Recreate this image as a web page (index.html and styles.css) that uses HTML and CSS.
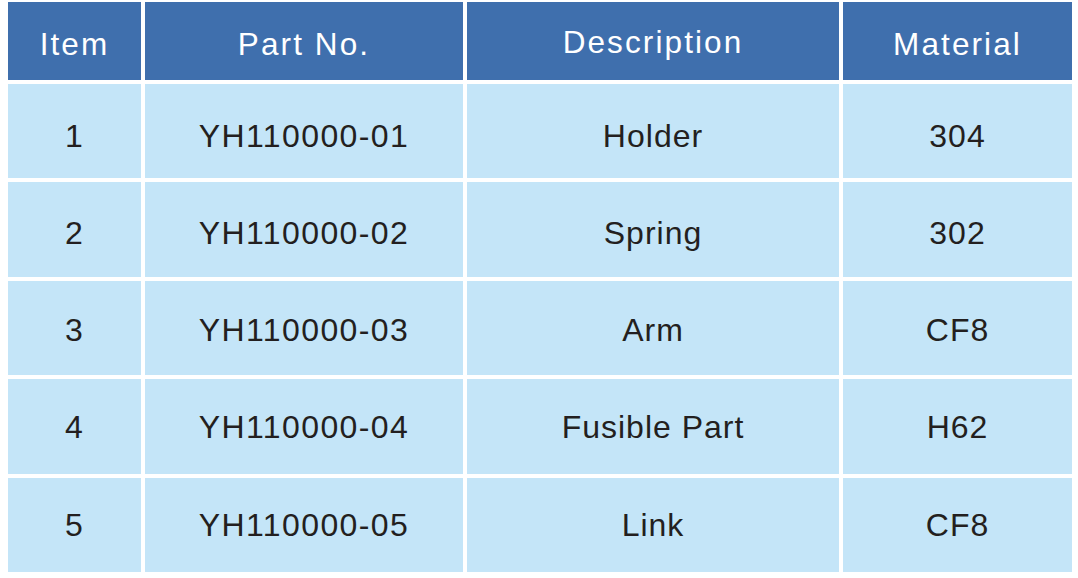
FILE: index.html
```html
<!DOCTYPE html>
<html lang="en">
<head>
<meta charset="utf-8">
<title>Parts</title>
<link rel="stylesheet" href="styles.css">
</head>
<body>
<div class="sheet">
  <div class="parts">
    <div class="cell head">Item</div>
    <div class="cell head">Part No.</div>
    <div class="cell head head-desc">Description</div>
    <div class="cell head">Material</div>

    <div class="cell r1">1</div>
    <div class="cell r1 code">YH110000-01</div>
    <div class="cell r1">Holder</div>
    <div class="cell r1">304</div>

    <div class="cell r2">2</div>
    <div class="cell r2 code">YH110000-02</div>
    <div class="cell r2">Spring</div>
    <div class="cell r2">302</div>

    <div class="cell r3">3</div>
    <div class="cell r3 code">YH110000-03</div>
    <div class="cell r3">Arm</div>
    <div class="cell r3">CF8</div>

    <div class="cell r4">4</div>
    <div class="cell r4 code">YH110000-04</div>
    <div class="cell r4">Fusible Part</div>
    <div class="cell r4">H62</div>

    <div class="cell r5">5</div>
    <div class="cell r5 code">YH110000-05</div>
    <div class="cell r5">Link</div>
    <div class="cell r5">CF8</div>
  </div>
</div>
</body>
</html>
```
FILE: styles.css
```css
html, body {
  margin: 0;
  padding: 0;
  background: #ffffff;
}

.sheet {
  padding: 2px 0 0 8px;
}

.parts {
  display: grid;
  grid-template-columns: 133px 318px 372px 229px;
  grid-template-rows: 78px repeat(5, 1fr);
  column-gap: 4px;
  row-gap: 4px;
  width: 1064px;
  height: 570px;
  font-family: "Liberation Sans", Arial, sans-serif;
}

.cell {
  display: flex;
  align-items: center;
  justify-content: center;
  background: #c4e5f8;
  color: #231f20;
  font-size: 32px;
  letter-spacing: 1px;
  line-height: 1;
}

.code {
  letter-spacing: 1.4px;
}

.head {
  background: #3f6fad;
  color: #ffffff;
  font-size: 31.5px;
  letter-spacing: 2.1px;
  padding-top: 8px;
}

.head-desc {
  padding-top: 4px;
}

.r1 { padding-top: 10px; }
.r2 { padding-top: 7px; }
.r3 { padding-top: 5px; }
.r4 { padding-top: 1px; }
.r5 { padding-top: 0; }
```
